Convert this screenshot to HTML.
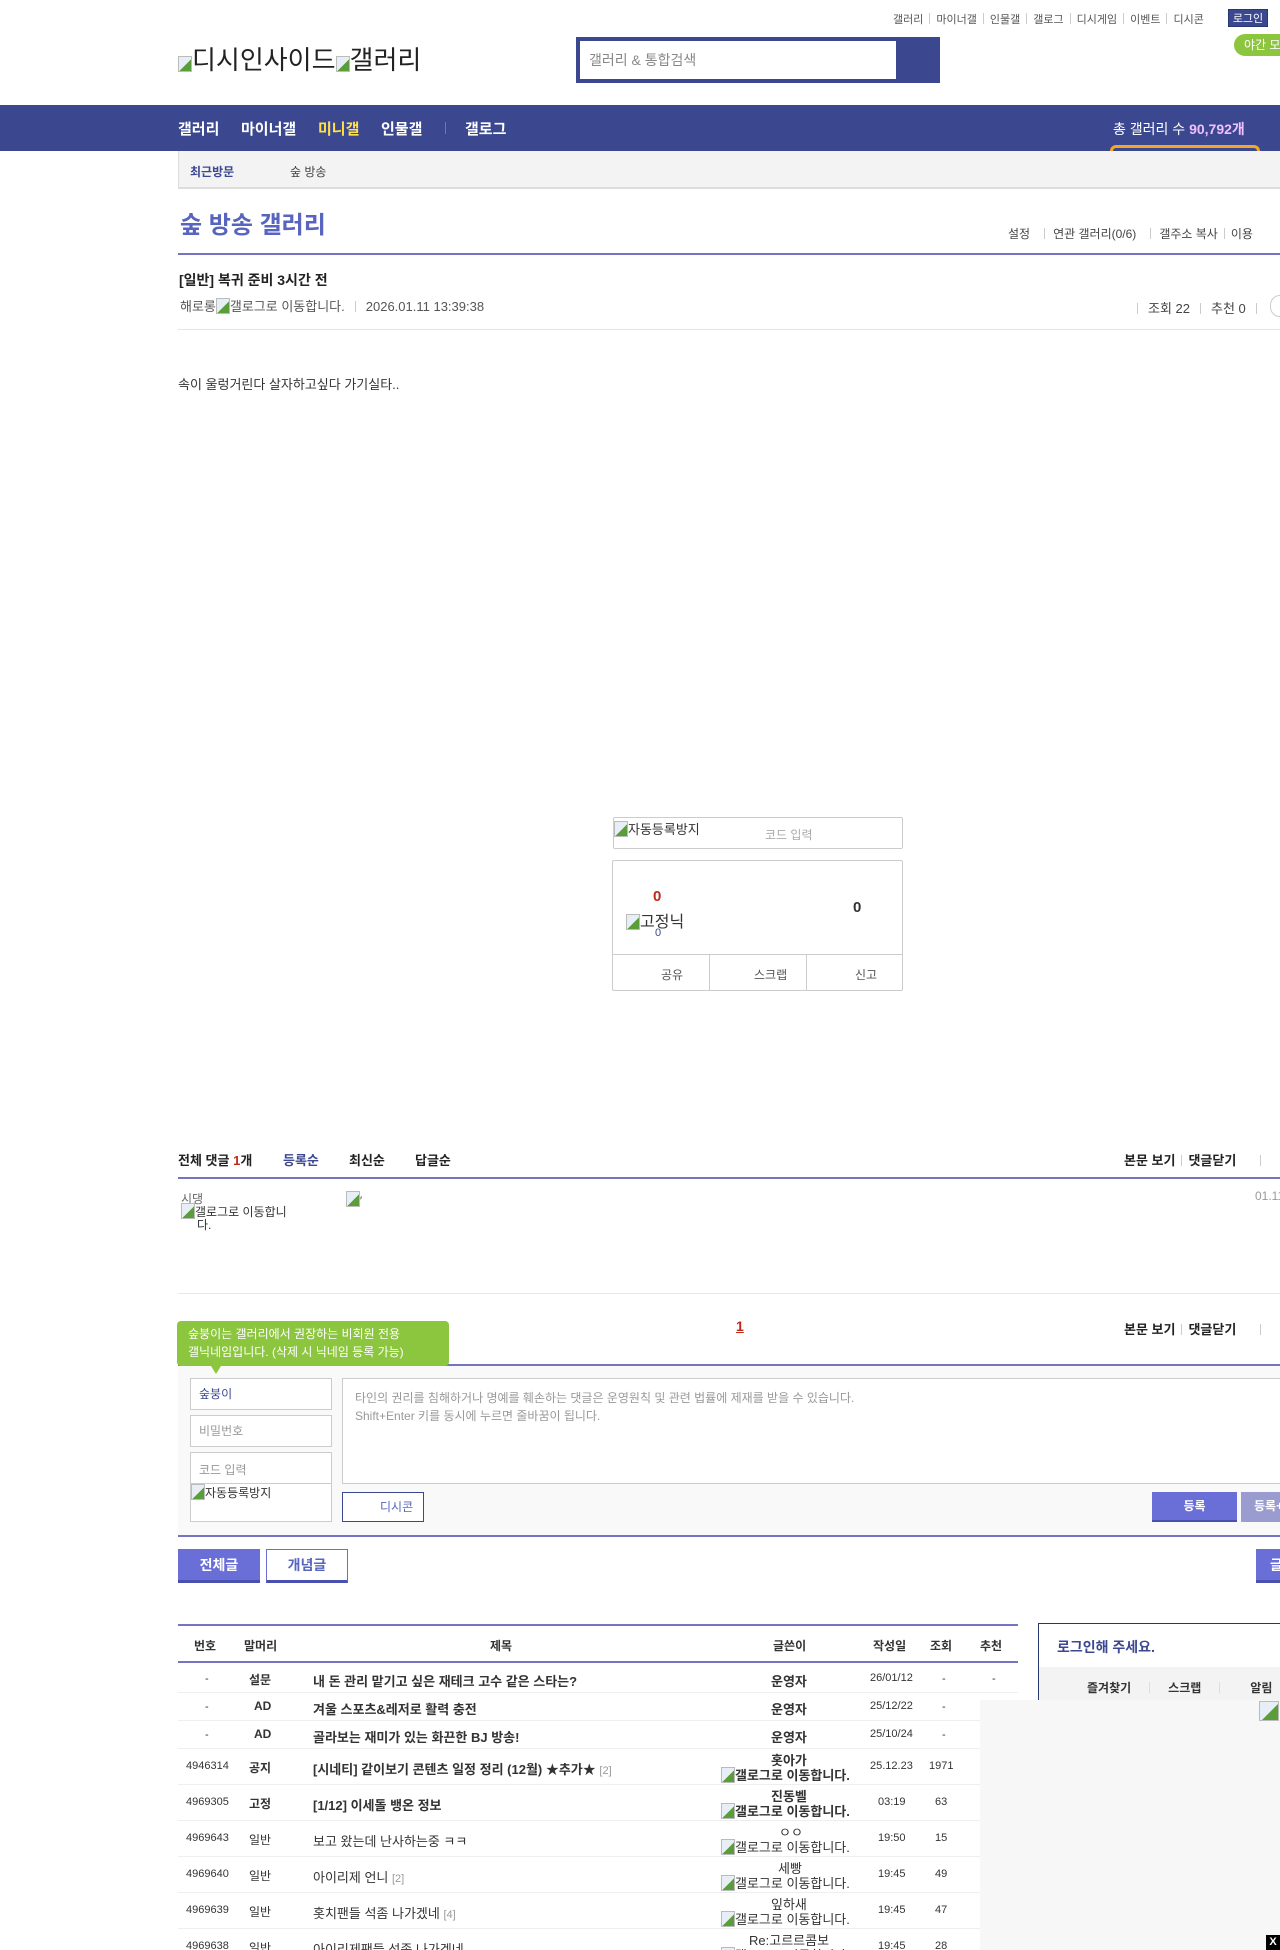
<!DOCTYPE html>
<html><head><meta charset="utf-8">
<style>
*{margin:0;padding:0;box-sizing:border-box}
html,body{width:1280px;height:1950px;overflow:hidden;background:#fff}
body{font-family:"Liberation Sans","Noto Sans CJK KR",sans-serif;color:#333;position:relative;font-size:13px}
.a{position:absolute;white-space:nowrap}
.sep{display:inline-block;width:1px;height:11px;background:#ccc;margin:0 6px;vertical-align:-1px}
.bi{display:inline-block;width:14px;height:16px;border:1px solid #bbb;background:linear-gradient(135deg,#e8eef5 55%,#5a9e3c 56%);vertical-align:-3px}
.nav a{color:#fff;font-weight:bold;font-size:15px;position:absolute;top:13px}
.row{position:absolute;left:178px;width:840px;border-bottom:1px solid #eee;font-size:13px}
.row span{position:absolute;white-space:nowrap}
</style></head><body>

<div class="a" style="top:11px;left:893px;font-size:11px;color:#555">갤러리<span class="sep"></span>마이너갤<span class="sep"></span>인물갤<span class="sep"></span>갤로그<span class="sep"></span>디시게임<span class="sep"></span>이벤트<span class="sep"></span>디시콘</div>
<div class="a" style="top:9px;left:1228px;width:40px;height:18px;background:#3b4890;color:#fff;font-size:11px;text-align:center;line-height:18px;border:1px solid #2a3670">로그인</div>
<div class="a" style="top:34px;left:1234px;width:60px;height:22px;background:#8cc63e;color:#fff;border-radius:11px;font-size:12px;line-height:22px;padding-left:10px">야간 모드</div>

<div class="a" style="top:40px;left:178px;font-size:26px;color:#222"><span class="bi"></span>디시인사이드<span class="bi"></span>갤러리</div>

<div class="a" style="top:37px;left:576px;width:364px;height:46px;background:#3b4890"></div>
<div class="a" style="top:41px;left:580px;width:316px;height:38px;background:#fff;font-size:14px;color:#888;line-height:38px;padding-left:9px">갤러리 &amp; 통합검색</div>

<div class="a nav" style="top:105px;left:0;width:1280px;height:46px;background:#3b4890">
<a style="left:178px">갤러리</a><a style="left:241px">마이너갤</a><a style="left:318px;color:#ffe14a">미니갤</a><a style="left:381px">인물갤</a>
<span class="a" style="left:445px;top:17px;width:1px;height:12px;background:#6a76b8"></span>
<a style="left:465px">갤로그</a>
<span class="a" style="left:1113px;top:14px;color:#fff;font-size:14px">총 갤러리 수 <b style="color:#f0c0ff">90,792개</b></span>
<span class="a" style="left:1110px;top:40px;width:150px;height:8px;border:3px solid #f5a623;border-bottom:none;border-radius:6px 6px 0 0"></span>
</div>

<div class="a" style="top:151px;left:178px;width:1110px;height:38px;background:#f3f3f3;border-left:1px solid #ddd;border-bottom:2px solid #ddd"></div>
<div class="a" style="top:163px;left:190px;font-size:12px;font-weight:bold;color:#3b4890">최근방문</div>
<div class="a" style="top:163px;left:290px;font-size:12px;color:#444">숲 방송</div>

<div class="a" style="top:205px;left:180px;font-size:24px;color:#5865c0;font-weight:bold">숲 방송 갤러리</div>
<div class="a" style="top:225px;left:1008px;font-size:12px;color:#444">설정<span class="sep" style="margin:0 8px 0 14px"></span>연관 갤러리(0/6)<span class="sep" style="margin:0 8px 0 14px"></span>갤주소 복사<span class="sep"></span>이용</div>
<div class="a" style="top:253px;left:178px;width:1110px;height:2px;background:#7474c0"></div>

<div class="a" style="top:270px;left:179px;font-size:14px;font-weight:bold;color:#222">[일반] 복귀 준비 3시간 전</div>
<div class="a" style="top:296px;left:180px;font-size:13px;color:#555">해로롱<span class="bi"></span>갤로그로 이동합니다.<span class="sep" style="margin:0 10px"></span>2026.01.11 13:39:38</div>
<div class="a" style="top:298px;left:1137px;font-size:13px;color:#444"><span class="sep" style="margin:0 10px 0 0"></span>조회 22<span class="sep" style="margin:0 10px"></span>추천 0<span class="sep" style="margin:0 10px"></span></div>
<div class="a" style="top:295px;left:1270px;width:20px;height:22px;border:1px solid #ccc;border-radius:11px"></div>
<div class="a" style="top:329px;left:178px;width:1110px;height:1px;background:#e5e5e5"></div>
<div class="a" style="top:374px;left:178px;font-size:13px;color:#333">속이 울렁거린다 살자하고싶다 가기실타..</div>

<div class="a" style="top:817px;left:613px;width:290px;height:32px;border:1px solid #ccc;border-radius:2px"></div>
<div class="a" style="top:819px;left:614px;font-size:13px;color:#333"><span class="bi"></span>자동등록방지</div>
<div class="a" style="top:826px;left:765px;font-size:12px;color:#aaa">코드 입력</div>
<div class="a" style="top:860px;left:612px;width:291px;height:131px;border:1px solid #ccc;border-radius:2px"></div>
<div class="a" style="top:888px;left:653px;font-size:15px;font-weight:bold;color:#c0281a">0</div>
<div class="a" style="top:908px;left:626px;font-size:16px;color:#333"><span class="bi"></span>고정닉</div>
<div class="a" style="top:927px;left:655px;font-size:11px;color:#3b4890">0</div>
<div class="a" style="top:899px;left:853px;font-size:15px;font-weight:bold;color:#333">0</div>
<div class="a" style="top:954px;left:613px;width:289px;height:1px;background:#ccc"></div>
<div class="a" style="top:955px;left:709px;width:1px;height:36px;background:#ccc"></div>
<div class="a" style="top:955px;left:806px;width:1px;height:36px;background:#ccc"></div>
<div class="a" style="top:966px;left:661px;font-size:12px;color:#555">공유</div>
<div class="a" style="top:966px;left:754px;font-size:12px;color:#555">스크랩</div>
<div class="a" style="top:966px;left:855px;font-size:12px;color:#555">신고</div>

<div class="a" style="top:1150px;left:178px;font-size:13px;font-weight:bold;color:#222">전체 댓글 <span style="color:#c0281a">1</span>개</div>
<div class="a" style="top:1150px;left:283px;font-size:13px;font-weight:bold;color:#3b4890">등록순</div>
<div class="a" style="top:1150px;left:349px;font-size:13px;font-weight:bold;color:#222">최신순</div>
<div class="a" style="top:1150px;left:415px;font-size:13px;font-weight:bold;color:#222">답글순</div>
<div class="a" style="top:1150px;left:1124px;font-size:13px;font-weight:bold;color:#222">본문 보기<span class="sep"></span>댓글닫기<span class="sep" style="margin-left:24px"></span></div>
<div class="a" style="top:1177px;left:178px;width:1110px;height:2px;background:#7474c0"></div>
<div class="a" style="top:1190px;left:181px;font-size:12px;color:#666">시댕</div>
<div class="a" style="top:1203px;left:181px;font-size:12px;color:#333;line-height:12px"><span class="bi"></span>갤로그로 이동합니<br><span style="padding-left:16px">다.</span></div>
<div class="a" style="top:1191px;left:346px;font-size:11px"><span class="bi"></span>′</div>
<div class="a" style="top:1189px;left:1255px;font-size:12px;color:#999">01.11</div>
<div class="a" style="top:1293px;left:178px;width:1110px;height:1px;background:#e8e8e8"></div>

<div class="a" style="top:1318px;left:736px;font-size:14px;font-weight:bold;color:#c0281a;text-decoration:underline">1</div>
<div class="a" style="top:1319px;left:1124px;font-size:13px;font-weight:bold;color:#222">본문 보기<span class="sep"></span>댓글닫기<span class="sep" style="margin-left:24px"></span></div>
<div class="a" style="top:1364px;left:178px;width:1110px;height:2px;background:#7474c0"></div>
<div class="a" style="top:1366px;left:178px;width:1110px;height:170px;background:#f9f9f9"></div>
<div class="a" style="top:1321px;left:177px;width:272px;height:45px;background:#8cc63e;border-radius:4px;color:#fff;font-size:12px;line-height:18px;padding:4px 0 0 11px;white-space:normal">숲붕이는 갤러리에서 권장하는 비회원 전용<br>갤닉네임입니다. (삭제 시 닉네임 등록 가능)</div>
<div class="a" style="top:1366px;left:211px;width:0;height:0;border-left:5px solid transparent;border-right:5px solid transparent;border-top:8px solid #8cc63e"></div>
<div class="a" style="top:1378px;left:190px;width:142px;height:32px;background:#fff;border:1px solid #ccc;font-size:12px;color:#3b4890;line-height:30px;padding-left:8px">숲붕이</div>
<div class="a" style="top:1415px;left:190px;width:142px;height:32px;background:#fff;border:1px solid #ccc;font-size:12px;color:#999;line-height:30px;padding-left:8px">비밀번호</div>
<div class="a" style="top:1452px;left:190px;width:142px;height:70px;background:#fff;border:1px solid #ccc;font-size:12px;color:#999;padding:8px 0 0 8px">코드 입력</div>
<div class="a" style="top:1483px;left:190px;width:142px;height:1px;background:#ccc"></div>
<div class="a" style="top:1484px;left:191px;font-size:12px;color:#333"><span class="bi"></span>자동등록방지</div>
<div class="a" style="top:1378px;left:342px;width:950px;height:106px;background:#fff;border:1px solid #ccc;font-size:12px;color:#999;line-height:18px;padding:10px 12px;white-space:normal">타인의 권리를 침해하거나 명예를 훼손하는 댓글은 운영원칙 및 관련 법률에 제재를 받을 수 있습니다.<br>Shift+Enter 키를 동시에 누르면 줄바꿈이 됩니다.</div>
<div class="a" style="top:1492px;left:342px;width:82px;height:30px;background:#fff;border:1px solid #3b4890;font-size:12px;color:#5865c0;line-height:28px;padding-left:37px">디시콘</div>
<div class="a" style="top:1492px;left:1152px;width:85px;height:30px;background:#6a6fd8;border-bottom:2px solid #4a50b0;color:#fff;font-size:12px;font-weight:bold;line-height:28px;text-align:center">등록</div>
<div class="a" style="top:1492px;left:1241px;width:60px;height:30px;background:#9a9cd0;color:#fff;font-size:12px;font-weight:bold;line-height:28px;padding-left:13px">등록+추천</div>
<div class="a" style="top:1535px;left:178px;width:1110px;height:2px;background:#7474c0"></div>

<div class="a" style="top:1549px;left:178px;width:82px;height:34px;background:#6a6fd8;border-bottom:3px solid #4a50b0;color:#fff;font-size:14px;font-weight:bold;line-height:32px;text-align:center">전체글</div>
<div class="a" style="top:1549px;left:266px;width:82px;height:34px;background:#fff;border:1px solid #6a6fd8;border-bottom:3px solid #4a50b0;color:#5865c0;font-size:14px;font-weight:bold;line-height:30px;text-align:center">개념글</div>
<div class="a" style="top:1549px;left:1256px;width:40px;height:34px;background:#6a6fd8;border-bottom:3px solid #4a50b0;color:#fff;font-size:14px;font-weight:bold;line-height:32px;padding-left:14px">글쓰기</div>

<div class="a" style="top:1624px;left:178px;width:840px;height:2px;background:#7474c0"></div>
<div class="row" style="top:1626px;height:37px;border-bottom:2px solid #7474c0;font-weight:bold;font-size:12px;color:#333">
<span style="left:16px;top:11px">번호</span><span style="left:66px;top:11px">말머리</span><span style="left:312px;top:11px">제목</span><span style="left:595px;top:11px">글쓴이</span><span style="left:695px;top:11px">작성일</span><span style="left:752px;top:11px">조회</span><span style="left:802px;top:11px">추천</span></div>

<div class="row" style="top:1665px;height:28px;font-weight:bold"><span style="left:27px;top:8px;font-weight:normal;font-size:11px">-</span><span style="left:71px;top:6px;font-size:12px">설문</span><span style="left:135px;top:6px">내 돈 관리 맡기고 싶은 재테크 고수 같은 스타는?</span><span style="left:593px;top:6px">운영자</span><span style="left:692px;top:7px;font-weight:normal;font-size:11px">26/01/12</span><span style="left:764px;top:8px;font-weight:normal;font-size:11px">-</span><span style="left:814px;top:8px;font-weight:normal;font-size:11px">-</span></div>
<div class="row" style="top:1693px;height:28px;font-weight:bold"><span style="left:27px;top:8px;font-weight:normal;font-size:11px">-</span><span style="left:76px;top:6px;font-size:12px">AD</span><span style="left:135px;top:6px">겨울 스포츠&amp;레저로 활력 충전</span><span style="left:593px;top:6px">운영자</span><span style="left:692px;top:7px;font-weight:normal;font-size:11px">25/12/22</span><span style="left:764px;top:8px;font-weight:normal;font-size:11px">-</span></div>
<div class="row" style="top:1721px;height:28px;font-weight:bold"><span style="left:27px;top:8px;font-weight:normal;font-size:11px">-</span><span style="left:76px;top:6px;font-size:12px">AD</span><span style="left:135px;top:6px">골라보는 재미가 있는 화끈한 BJ 방송!</span><span style="left:593px;top:6px">운영자</span><span style="left:692px;top:7px;font-weight:normal;font-size:11px">25/10/24</span><span style="left:764px;top:8px;font-weight:normal;font-size:11px">-</span></div>

<div class="row" style="top:1749px;height:36px"><span style="left:8px;top:11px;font-size:11px">4946314</span><span style="left:71px;top:10px;font-weight:bold;font-size:12px">공지</span><span style="left:135px;top:10px;font-weight:bold">[시네티] 같이보기 콘텐츠 일정 정리 (12월) ★추가★ <span style="color:#999;font-weight:normal;font-size:11px;position:static">[2]</span></span><span style="left:593px;top:1px;font-weight:bold">홋아가</span><span style="left:543px;top:16px;font-weight:bold"><span class="bi" style="position:static"></span>갤로그로 이동합니다.</span><span style="left:692px;top:11px;font-size:11px">25.12.23</span><span style="left:751px;top:11px;font-size:11px">1971</span></div>
<div class="row" style="top:1785px;height:36px"><span style="left:8px;top:11px;font-size:11px">4969305</span><span style="left:71px;top:10px;font-weight:bold;font-size:12px">고정</span><span style="left:135px;top:10px;font-weight:bold">[1/12] 이세돌 뱅온 정보</span><span style="left:593px;top:1px;font-weight:bold">진동벨</span><span style="left:543px;top:16px;font-weight:bold"><span class="bi" style="position:static"></span>갤로그로 이동합니다.</span><span style="left:700px;top:11px;font-size:11px">03:19</span><span style="left:757px;top:11px;font-size:11px">63</span></div>
<div class="row" style="top:1821px;height:36px"><span style="left:8px;top:11px;font-size:11px">4969643</span><span style="left:71px;top:10px;font-size:12px">일반</span><span style="left:135px;top:10px">보고 왔는데 난사하는중 ㅋㅋ</span><span style="left:601px;top:1px">ㅇㅇ</span><span style="left:543px;top:16px"><span class="bi" style="position:static"></span>갤로그로 이동합니다.</span><span style="left:700px;top:11px;font-size:11px">19:50</span><span style="left:757px;top:11px;font-size:11px">15</span></div>
<div class="row" style="top:1857px;height:36px"><span style="left:8px;top:11px;font-size:11px">4969640</span><span style="left:71px;top:10px;font-size:12px">일반</span><span style="left:135px;top:10px">아이리제 언니 <span style="color:#999;font-size:11px;position:static">[2]</span></span><span style="left:600px;top:1px">세빵</span><span style="left:543px;top:16px"><span class="bi" style="position:static"></span>갤로그로 이동합니다.</span><span style="left:700px;top:11px;font-size:11px">19:45</span><span style="left:757px;top:11px;font-size:11px">49</span></div>
<div class="row" style="top:1893px;height:36px"><span style="left:8px;top:11px;font-size:11px">4969639</span><span style="left:71px;top:10px;font-size:12px">일반</span><span style="left:135px;top:10px">홋치팬들 석좀 나가겠네 <span style="color:#999;font-size:11px;position:static">[4]</span></span><span style="left:593px;top:1px">잎하새</span><span style="left:543px;top:16px"><span class="bi" style="position:static"></span>갤로그로 이동합니다.</span><span style="left:700px;top:11px;font-size:11px">19:45</span><span style="left:757px;top:11px;font-size:11px">47</span></div>
<div class="row" style="top:1929px;height:36px;border:none"><span style="left:8px;top:11px;font-size:11px">4969638</span><span style="left:71px;top:10px;font-size:12px">일반</span><span style="left:135px;top:10px">아이리제팬들 석좀 나가겠네</span><span style="left:571px;top:1px">Re:고르르콤보</span><span style="left:543px;top:16px"><span class="bi" style="position:static"></span>갤로그로 이동합니다.</span><span style="left:700px;top:11px;font-size:11px">19:45</span><span style="left:757px;top:11px;font-size:11px">28</span></div>

<div class="a" style="top:1623px;left:1038px;width:260px;height:90px;border:1px solid #2a3670;background:#fff"></div>
<div class="a" style="top:1637px;left:1057px;font-size:14px;font-weight:bold;color:#3b4890">로그인해 주세요.</div>
<div class="a" style="top:1667px;left:1039px;width:260px;height:50px;background:#f3f3f3"></div>
<div class="a" style="top:1679px;left:1087px;font-size:12px;font-weight:bold;color:#333">즐겨찾기<span class="sep" style="margin:0 18px;background:#ddd"></span>스크랩<span class="sep" style="margin:0 30px 0 18px;background:#ddd"></span>알림</div>

<div class="a" style="top:1700px;left:980px;width:300px;height:250px;background:#f7f7f7"></div>
<div class="a" style="top:1701px;left:1259px"><span class="bi" style="width:20px;height:20px"></span></div>
<div class="a" style="top:1935px;left:1266px;width:14px;height:15px;background:#000;color:#fff;font-size:11px;font-weight:bold;text-align:center;line-height:15px">X</div>
</body></html>
